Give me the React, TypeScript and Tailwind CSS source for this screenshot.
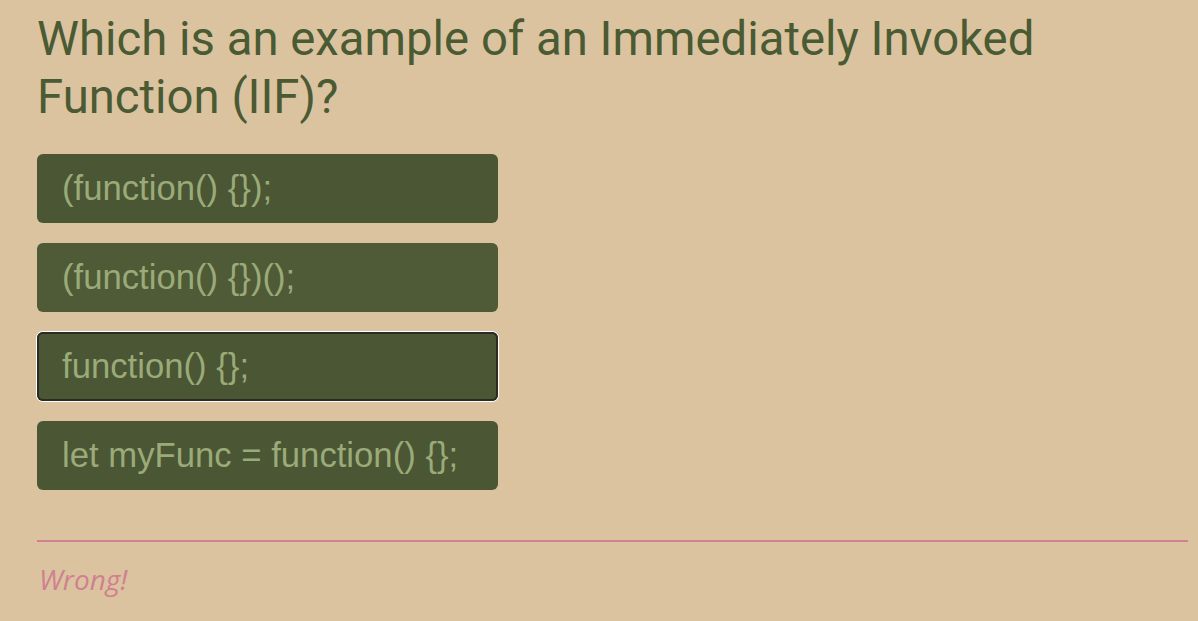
import React from "react";

export default function App() {
  const options = [
    { t: "(function() {});", cls: "bg-[#4a5634]" },
    { t: "(function() {})();", cls: "bg-[#4f5a37]" },
    { t: "function() {};", cls: "bg-[#4a5634] shadow-[inset_0_0_0_2px_#2b2b24,0_0_0_1px_#ffffff]" },
    { t: "let myFunc = function() {};", cls: "bg-[#4a5634]" },
  ];
  return (
    <div className="min-h-[621px] w-full bg-[#dbc3a0] pl-[37px] pr-[10px] pt-[10px]">
      <h1 className="text-[47.3px] leading-[58px] text-[#4a5a33] font-normal" style={{ fontFamily: "Roboto, sans-serif" }}>
        Which is an example of an Immediately Invoked
        <br />
        Function (IIF)?
      </h1>
      <div className="mt-[28px] flex flex-col gap-[20px]">
        {options.map((o, i) => (
          <div
            key={i}
            className={`w-[461px] h-[69px] rounded-[6px] flex items-center pl-[25px] text-[#9aaa78] text-[34.7px] ${o.cls}`}
            style={{ fontFamily: '"Liberation Sans", Arial, sans-serif' }}
          >
            {o.t}
          </div>
        ))}
      </div>
      <div className="mt-[50px] h-[2px] bg-[#d08090]" />
      <div className="mt-[16px] pl-[2px] text-[28px] italic text-[#d08090]" style={{ fontFamily: '"Open Sans", sans-serif' }}>
        Wrong!
      </div>
    </div>
  );
}
